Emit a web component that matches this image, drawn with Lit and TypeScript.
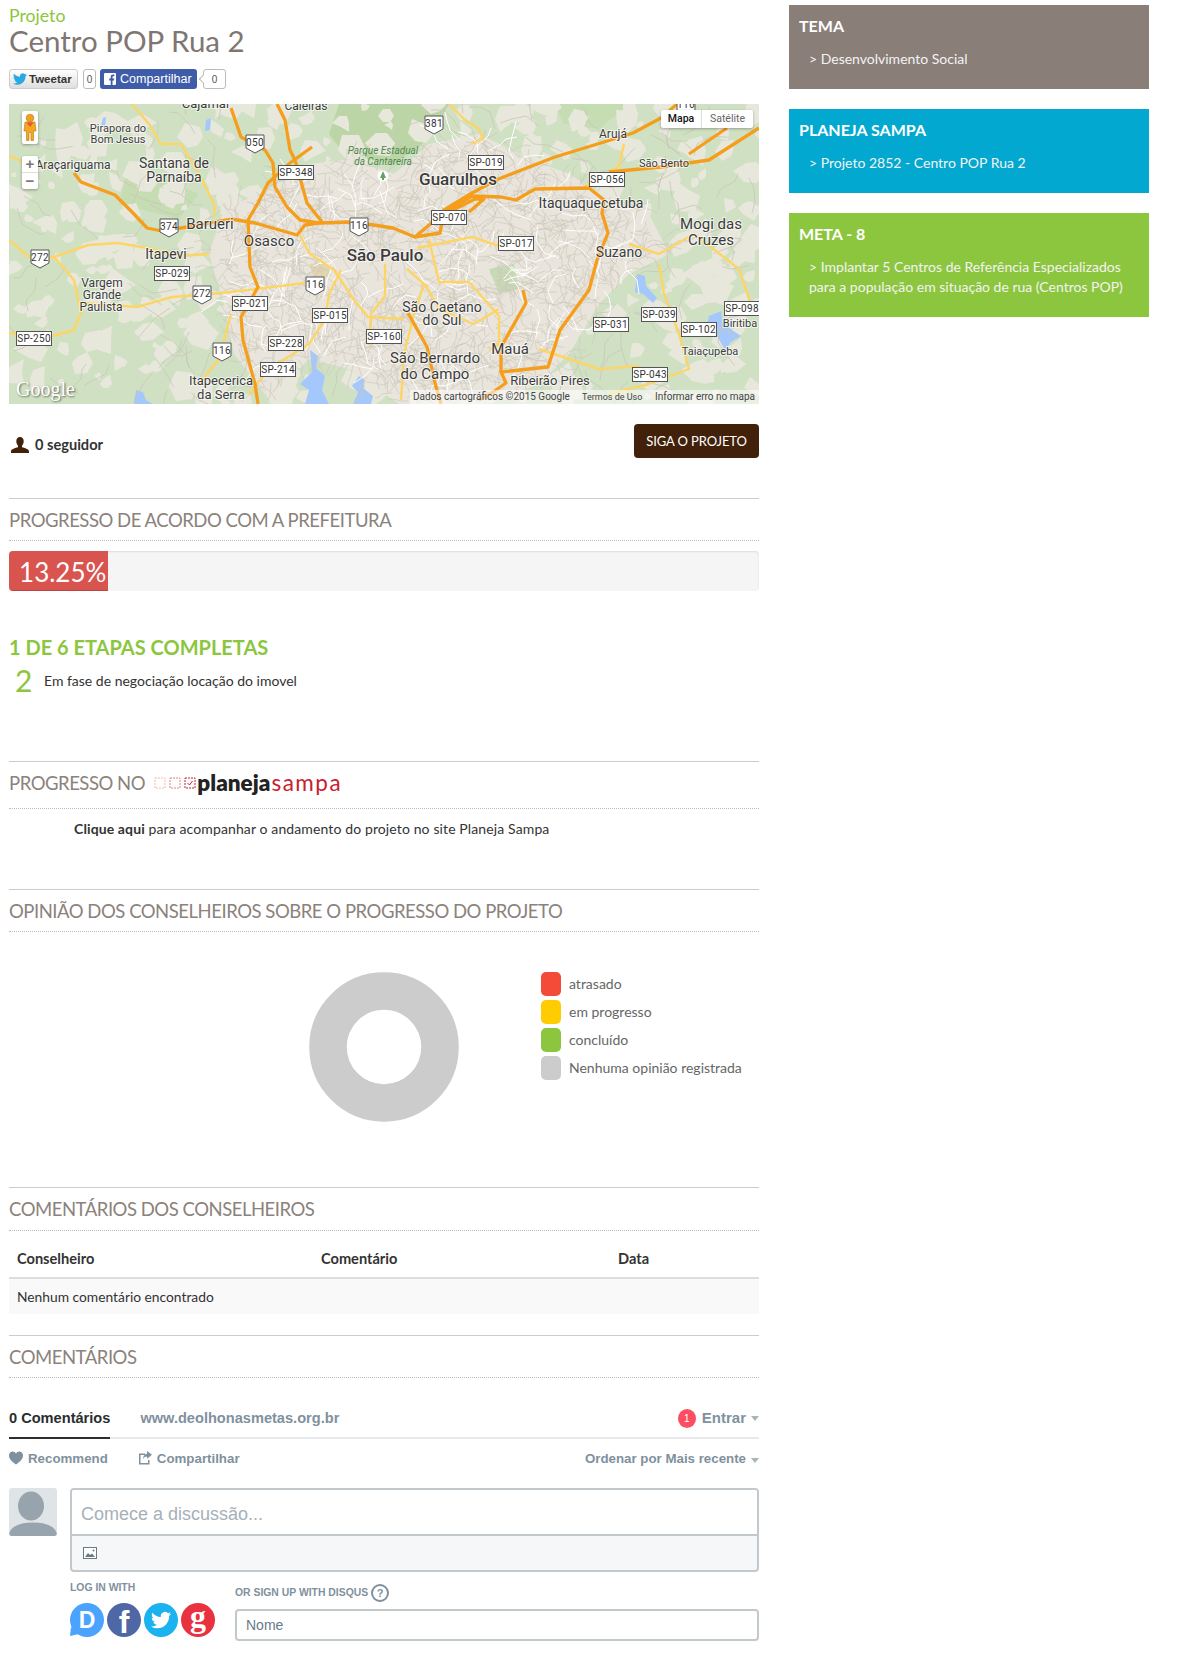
import { LitElement, html, css, svg } from 'lit';
import { customElement } from 'lit/decorators.js';

type Pt = [number, number];

const URBAN: Pt[] = [
  [300, 60], [345, 55], [385, 70], [420, 40], [470, 30], [520, 55], [560, 70], [600, 95],
  [640, 110], [660, 150], [620, 170], [590, 200], [560, 250], [530, 280], [480, 300],
  [390, 300], [340, 265], [300, 255], [260, 295], [225, 250], [215, 200], [200, 150],
  [215, 105], [250, 90],
];

const ORANGE: Pt[][] = [
  [[65, 69], [72, 78], [106, 91], [124, 109], [138, 124], [153, 127], [178, 123], [222, 115], [246, 119], [288, 131], [296, 121], [310, 119], [345, 118], [384, 124], [406, 133], [431, 129], [435, 106], [463, 89], [487, 76], [546, 53], [595, 38], [624, 29], [652, 14], [668, 0]],
  [[268, 0], [276, 16], [281, 46], [286, 56], [298, 99], [313, 118]],
  [[303, 43], [281, 59], [259, 79], [249, 99], [239, 116], [241, 163], [249, 183], [232, 213], [234, 236], [246, 280], [249, 300]],
  [[222, 4], [232, 33], [256, 46], [264, 59], [266, 83], [278, 103], [291, 116], [310, 119]],
  [[406, 133], [433, 110], [463, 92], [492, 93], [507, 96], [526, 85], [580, 84], [595, 96], [593, 109], [599, 129], [588, 156], [580, 186], [551, 226], [539, 263], [492, 268], [497, 279], [484, 288], [470, 296]],
  [[440, 108], [466, 95], [475, 95], [460, 108]],
  [[600, 68], [652, 63], [700, 56], [750, 24]],
  [[718, 24], [693, 41], [680, 50]],
  [[514, 186], [517, 199], [492, 243], [492, 268]],
  [[399, 209], [418, 243], [426, 279], [432, 300]],
];

const YELLOW: Pt[][] = [
  [[0, 136], [20, 153], [45, 153], [79, 141], [109, 139], [138, 144], [170, 152], [200, 150]],
  [[45, 153], [65, 176], [72, 209], [65, 226], [40, 233], [0, 229]],
  [[74, 199], [128, 203], [163, 193], [192, 191], [222, 188], [296, 179]],
  [[291, 131], [300, 149], [325, 166], [345, 196], [359, 213], [395, 215]],
  [[408, 144], [463, 133], [487, 141], [505, 136]],
  [[332, 166], [320, 190], [316, 215], [300, 240], [260, 265], [240, 290]],
  [[376, 160], [376, 192], [362, 210], [360, 240], [380, 232]],
  [[398, 165], [415, 180], [405, 210], [395, 250], [392, 296]],
  [[416, 180], [430, 205], [465, 220], [490, 205]],
  [[420, 135], [430, 178], [460, 178], [490, 212], [490, 240], [480, 245]],
  [[123, 0], [140, 20], [152, 40], [172, 40], [190, 70], [205, 100], [206, 112]],
  [[0, 52], [15, 58], [40, 62]],
  [[440, 0], [455, 15], [470, 25], [474, 35], [462, 40]],
  [[572, 85], [610, 62], [615, 40]],
  [[620, 140], [650, 150], [685, 130], [730, 165], [745, 210]],
  [[600, 290], [640, 280], [680, 265], [670, 230], [655, 190], [650, 160]],
  [[190, 280], [210, 255], [222, 210]],
  [[530, 245], [590, 265], [630, 262]],
];

const BLUE: Pt[][] = [
  [[301, 246], [309, 252], [307, 264], [316, 272], [313, 286], [320, 300], [296, 300], [300, 286], [291, 280], [303, 268]],
  [[350, 272], [356, 276], [354, 284], [364, 292], [362, 300], [344, 300], [349, 288], [343, 282]],
  [[628, 170], [636, 172], [637, 182], [648, 194], [644, 199], [634, 190], [626, 188]],
  [[700, 212], [712, 207], [714, 220], [732, 232], [722, 238], [716, 246], [708, 232], [696, 228]],
  [[127, 286], [134, 288], [137, 296], [144, 300], [125, 300]],
  [[94, 14], [97, 13], [96, 22], [92, 22]],
  [[197, 16], [202, 14], [201, 26], [196, 27]],
];

type Label = [string, number, number, number, number?];

const LABELS: Label[] = [
  ['Cajamar', 197, -1, 13], ['Caieiras', 297, 2, 12],
  ['Pirapora do', 109, 24, 11], ['Bom Jesus', 109, 35, 11], ['Araçariguama', 64, 61, 12],
  ['Santana de', 165, 59, 14], ['Parnaíba', 165, 73, 14],
  ['Guarulhos', 449, 75, 17, 500], ['São Paulo', 376, 151, 17, 500],
  ['Barueri', 201, 120, 15], ['Osasco', 260, 137, 15], ['Itapevi', 157, 150, 14],
  ['Itaquaquecetuba', 582, 99, 14], ['Mogi das', 702, 120, 15], ['Cruzes', 702, 136, 15],
  ['Suzano', 610, 148, 14], ['São Caetano', 433, 203, 14], ['do Sul', 433, 216, 14],
  ['São Bernardo', 426, 254, 15], ['do Campo', 426, 270, 15], ['Mauá', 501, 245, 15],
  ['Ribeirão Pires', 541, 276, 13], ['Itapecerica', 212, 276, 13], ['da Serra', 212, 290, 13],
  ['Vargem', 93, 179, 12], ['Grande', 93, 191, 12], ['Paulista', 92, 203, 12],
  ['Arujá', 604, 30, 12], ['São Bento', 655, 59, 11], ['Biritiba', 731, 219, 11], ['Taiaçupeba', 701, 247, 11],
];

const SHIELDS: [string, number, number][] = [
  ['050', 246, 40], ['381', 425, 21], ['374', 160, 124], ['272', 31, 155], ['272', 193, 191],
  ['116', 350, 123], ['116', 306, 182], ['116', 213, 248], ['116', 677, 2],
];

const SIGNS: [string, number, number][] = [
  ['SP-348', 287, 68], ['SP-019', 477, 58], ['SP-056', 598, 75], ['SP-070', 440, 113], ['SP-017', 507, 139],
  ['SP-029', 163, 169], ['SP-021', 241, 199], ['SP-015', 321, 211], ['SP-250', 25, 234], ['SP-228', 277, 239],
  ['SP-160', 375, 232], ['SP-214', 269, 265], ['SP-031', 602, 220], ['SP-039', 650, 210], ['SP-098', 733, 204],
  ['SP-102', 690, 225], ['SP-043', 641, 270],
];

const pts = (p: Pt[]) => p.map((q) => q.join(',')).join(' ');

function inside([x, y]: Pt, poly: Pt[]) {
  let hit = false;
  for (let i = 0, j = poly.length - 1; i < poly.length; j = i++) {
    const [xi, yi] = poly[i];
    const [xj, yj] = poly[j];
    if (yi > y !== yj > y && x < ((xj - xi) * (y - yi)) / (yj - yi) + xi) hit = !hit;
  }
  return hit;
}

// small seeded generator so the street texture is the same on every run
let seed = 4711;
const rnd = () => {
  seed = (seed * 16807) % 2147483647;
  return seed / 2147483647;
};

function streets(count: number, city: boolean, min: number, max: number) {
  const out: string[] = [];
  while (out.length < count) {
    const start: Pt = [rnd() * 750, rnd() * 300];
    if (inside(start, URBAN) !== city) continue;
    let a = rnd() * 6.28;
    const line: Pt[] = [start];
    for (let i = 0; i < 3; i++) {
      const [x, y] = line[line.length - 1];
      const len = min + rnd() * (max - min);
      line.push([Math.round(x + Math.cos(a) * len), Math.round(y + Math.sin(a) * len)]);
      a += (rnd() - 0.5) * 1.8;
    }
    out.push(pts(line));
  }
  return out;
}

function patches(count: number) {
  const out: string[] = [];
  while (out.length < count) {
    const c: Pt = [rnd() * 750, rnd() * 300];
    if (inside(c, URBAN)) continue;
    const r = 3 + rnd() * 11;
    const blob: Pt[] = [];
    for (let i = 0; i < 6; i++) {
      const a = (i / 6) * 6.28;
      const k = r * (0.5 + rnd());
      blob.push([Math.round(c[0] + Math.cos(a) * k), Math.round(c[1] + Math.sin(a) * k)]);
    }
    out.push(pts(blob));
  }
  return out;
}

const LIGHT = patches(290);
const FINE = streets(1300, true, 4, 11);
const WHITE = streets(150, true, 6, 16);
const RURAL = streets(110, false, 7, 18);

const BIRD = 'M23.953 4.57a10 10 0 01-2.825.775 4.958 4.958 0 002.163-2.723c-.951.555-2.005.959-3.127 1.184a4.92 4.92 0 00-8.384 4.482C7.69 8.095 4.067 6.13 1.64 3.162a4.822 4.822 0 00-.666 2.475c0 1.71.87 3.213 2.188 4.096a4.904 4.904 0 01-2.228-.616v.06a4.923 4.923 0 003.946 4.827 4.996 4.996 0 01-2.212.085 4.936 4.936 0 004.604 3.417 9.867 9.867 0 01-6.102 2.105c-.39 0-.779-.023-1.17-.067a13.995 13.995 0 007.557 2.209c9.053 0 13.998-7.496 13.998-13.985 0-.21 0-.42-.015-.63A9.935 9.935 0 0024 4.59z';

const LEGEND = [
  ['atrasado', '#f44b38'],
  ['em progresso', '#ffcc00'],
  ['concluído', '#8cc63e'],
  ['Nenhuma opinião registrada', '#cccccc'],
];

const SIDE = [
  { title: 'TEMA', text: ['> Desenvolvimento Social'], color: '#897e78' },
  { title: 'PLANEJA SAMPA', text: ['> Projeto 2852 - Centro POP Rua 2'], color: '#02a8cf' },
  {
    title: 'META - 8',
    text: ['> Implantar 5 Centros de Referência Especializados', 'para a população em situação de rua (Centros POP)'],
    color: '#8cc63e',
  },
];

@customElement('app-root')
export class AppRoot extends LitElement {
  static styles = css`
    :host {
      display: block;
      width: 1178px;
      height: 1655px;
      overflow: hidden;
      background: #fff;
      font-family: Lato, 'Noto Sans', sans-serif;
      font-size: 14px;
      color: #333;
    }

    .page {
      display: flex;
      gap: 30px;
      padding-left: 9px;
    }

    .main {
      width: 750px;
      flex: none;
    }

    .side {
      width: 360px;
      flex: none;
      display: flex;
      flex-direction: column;
      gap: 20px;
      padding-top: 5px;
    }

    .eyebrow {
      margin-top: 6px;
      font-size: 17.7px;
      line-height: 20px;
      color: #8cc63e;
    }

    h1 {
      margin: -1px 0 0;
      font-size: 29.5px;
      font-weight: 400;
      line-height: 32px;
      color: #7f7671;
    }

    .share {
      display: flex;
      height: 20px;
      margin-top: 12px;
      font: 700 11.5px 'Liberation Sans', sans-serif;
    }

    .tw {
      display: flex;
      align-items: center;
      gap: 2px;
      width: 69px;
      box-sizing: border-box;
      padding-left: 3px;
      border: 1px solid #ccc;
      border-radius: 3px;
      background: linear-gradient(#fff, #dedede);
      color: #333;
    }

    .tw svg {
      width: 14px;
      height: 14px;
      fill: #2aa9e0;
    }

    .count {
      display: flex;
      align-items: center;
      justify-content: center;
      box-sizing: border-box;
      height: 20px;
      border: 1px solid #bbb;
      border-radius: 3px;
      font: 400 10px 'Liberation Sans', sans-serif;
      color: #555;
    }

    .count-tw {
      width: 13px;
      margin: 0 4px 0 5px;
    }

    .count-fb {
      position: relative;
      width: 23px;
      margin-left: 6px;
    }

    .count-fb::before {
      content: '';
      position: absolute;
      left: -4px;
      top: 6px;
      width: 5px;
      height: 5px;
      background: #fff;
      border-left: 1px solid #bbb;
      border-bottom: 1px solid #bbb;
      transform: rotate(45deg);
    }

    .fb {
      display: flex;
      align-items: center;
      gap: 4px;
      width: 97px;
      box-sizing: border-box;
      padding-left: 4px;
      border-radius: 3px;
      background: #3f5ca8;
      color: #fff;
      font-weight: 400;
      font-size: 12.5px;
      white-space: nowrap;
    }

    .fb svg {
      width: 12px;
      height: 12px;
      flex: none;
    }

    .map {
      position: relative;
      height: 300px;
      margin-top: 15px;
      overflow: hidden;
    }

    .map > svg {
      display: block;
      width: 750px;
      height: 300px;
      background: #d0e1c3;
    }

    .street-fine {
      fill: none;
      stroke: #cdc8bc;
      stroke-width: 0.7;
    }

    .street-white {
      fill: none;
      stroke: #fff;
      stroke-width: 1;
    }

    .street-rural {
      fill: none;
      stroke: #c9c6b6;
      stroke-width: 0.8;
    }

    .road-o {
      fill: none;
      stroke: #f59e1c;
      stroke-width: 3.3;
      stroke-linejoin: round;
    }

    .road-y {
      fill: none;
      stroke: #fdd567;
      stroke-width: 2.4;
      stroke-linejoin: round;
    }

    .place {
      font-family: Roboto, sans-serif;
      text-anchor: middle;
      dominant-baseline: central;
      fill: #3c3c3c;
      stroke: rgba(255, 255, 255, 0.65);
      stroke-width: 2px;
      paint-order: stroke;
    }

    .park {
      font: italic 10px Roboto, sans-serif;
      text-anchor: middle;
      dominant-baseline: central;
      fill: #4b8a4b;
    }

    .sign-box {
      fill: #fff;
      stroke: #555;
      stroke-width: 1;
    }

    .sign-text {
      font: 10px Roboto, sans-serif;
      letter-spacing: 0.3px;
      text-anchor: middle;
      dominant-baseline: central;
      fill: #333;
    }

    .peg,
    .zoom-ctl {
      position: absolute;
      left: 13px;
      width: 16px;
      background: #fff;
      border-radius: 2px;
      box-shadow: 0 1px 3px rgba(0, 0, 0, 0.35);
    }

    .peg {
      top: 7px;
      height: 33px;
    }

    .peg svg {
      display: block;
      width: 16px;
      height: 33px;
    }

    .zoom-ctl {
      top: 52px;
      height: 33px;
      font: 700 15px/16px 'Liberation Sans', sans-serif;
      color: #777;
      text-align: center;
    }

    .zoom-ctl div:first-child {
      height: 16px;
      border-bottom: 1px solid #ddd;
    }

    .map-type {
      position: absolute;
      top: 6px;
      left: 652px;
      display: flex;
      width: 92px;
      height: 18px;
      font: 10.5px/18px Roboto, sans-serif;
      background: #fff;
      box-shadow: 0 1px 3px rgba(0, 0, 0, 0.3);
      border-radius: 2px;
      text-align: center;
    }

    .map-type span {
      flex: 1;
      color: #666;
    }

    .map-type span:first-child {
      flex: 0 0 41px;
      box-sizing: border-box;
      font-weight: 500;
      color: #111;
      border-right: 1px solid #ddd;
    }

    .map-foot {
      position: absolute;
      right: 0;
      bottom: 0;
      display: flex;
      box-sizing: border-box;
      width: 349px;
      height: 14px;
      padding-left: 3px;
      font: 10px/14px Roboto, sans-serif;
      color: #444;
      background: rgba(255, 255, 255, 0.55);
      white-space: nowrap;
    }

    .map-foot span:nth-child(1) {
      width: 169px;
    }

    .map-foot span:nth-child(2) {
      width: 73px;
      font-size: 9px;
    }

    .google {
      position: absolute;
      left: 7px;
      bottom: 3px;
      font: 20px 'Liberation Serif', serif;
      color: #fff;
      text-shadow: 1px 1px 2px rgba(0, 0, 0, 0.55);
    }

    .follow {
      display: flex;
      justify-content: space-between;
      align-items: flex-start;
      margin-top: 20px;
    }

    .followers {
      display: flex;
      align-items: center;
      gap: 6px;
      margin-top: 12px;
      font-weight: 700;
      font-size: 14.6px;
      line-height: 18px;
      color: #333;
    }

    .followers svg {
      width: 18px;
      height: 16px;
      margin-left: 2px;
      fill: #42210b;
    }

    .btn {
      width: 125px;
      height: 34px;
      border-radius: 4px;
      background: #42210b;
      color: #fff;
      font-size: 13px;
      letter-spacing: -0.1px;
      line-height: 34px;
      text-align: center;
    }

    .sec-head {
      display: flex;
      align-items: center;
      box-sizing: border-box;
      height: 43px;
      border-top: 1px solid #ccc;
      border-bottom: 1px dotted #bbb;
      font-size: 18.5px;
      letter-spacing: -0.47px;
      color: #8b827c;
      white-space: pre;
    }

    .sec-1 {
      margin-top: 40px;
    }

    .bar {
      height: 40px;
      box-sizing: border-box;
      margin-top: 10px;
      border-radius: 4px;
      background: #f5f5f5;
      box-shadow: inset 0 1px 2px rgba(0, 0, 0, 0.1);
      overflow: hidden;
    }

    .bar-fill {
      box-sizing: border-box;
      height: 100%;
      padding-right: 2px;
      background: #d9534f;
      color: #fff;
      font-size: 26px;
      line-height: 42px;
      text-align: right;
      box-shadow: inset 0 -1px 0 rgba(0, 0, 0, 0.15);
    }

    .steps {
      margin-top: 43px;
      font-size: 20px;
      font-weight: 700;
      line-height: 26px;
      color: #8cc63e;
    }

    .step {
      display: flex;
      align-items: center;
      height: 30px;
      margin-top: 5px;
      font-size: 14px;
      color: #333;
    }

    .step b {
      width: 35px;
      padding-left: 6px;
      box-sizing: border-box;
      font-size: 30px;
      font-weight: 400;
      color: #8cc63e;
    }

    .sec-2 {
      margin-top: 66px;
    }

    .sec-head.logo-head {
      height: 48px;
      padding-bottom: 4px;
    }

    .logo {
      display: flex;
      align-items: center;
      margin-left: 5px;
      letter-spacing: 0;
    }

    .logo svg {
      width: 42px;
      height: 14px;
      margin-right: 1px;
    }

    .logo b {
      font: 800 22.5px/24px Lato, sans-serif;
      color: #222;
    }

    .logo span {
      font: 400 22.5px/24px Lato, sans-serif;
      letter-spacing: 1.5px;
      color: #c8202f;
      margin-left: 1px;
    }

    .link-text {
      margin-top: 10px;
      padding-left: 65px;
      line-height: 20px;
      font-size: 14px;
      letter-spacing: 0.12px;
    }

    .sec-3 {
      margin-top: 50px;
    }

    .chart {
      display: flex;
      align-items: flex-start;
      gap: 83px;
      margin-top: 40px;
      padding-left: 300px;
      height: 150px;
    }

    .donut {
      display: block;
      width: 150px;
      height: 150px;
      flex: none;
      fill: none;
      stroke: #ccc;
    }

    .legend {
      display: flex;
      flex-direction: column;
      gap: 4px;
      margin-left: -1px;
    }

    .legend div {
      display: flex;
      align-items: center;
      gap: 8px;
      height: 24px;
      color: #666;
      font-size: 14px;
      white-space: nowrap;
    }

    .legend i {
      width: 20px;
      height: 24px;
      border-radius: 5px;
    }

    .legend span {
      margin-top: -2px;
    }

    .sec-head.sec-4 {
      height: 44px;
      margin-top: 65px;
    }

    table {
      width: 750px;
      border-collapse: collapse;
      table-layout: fixed;
    }

    th {
      height: 47px;
      box-sizing: border-box;
      padding: 9px 0 0 8px;
      border-bottom: 2px solid #ddd;
      text-align: left;
      font-weight: 700;
      font-size: 14.6px;
      color: #333;
    }

    td {
      height: 35px;
      padding: 0 0 0 8px;
      background: #f9f9f9;
      font-size: 13.8px;
    }

    .c1 {
      width: 304px;
    }

    .c2 {
      width: 297px;
    }

    .sec-5 {
      margin-top: 21px;
    }

    .dq {
      font-family: 'Liberation Sans', Arial, sans-serif;
      color: #7f919e;
      font-weight: 700;
    }

    .dq-tabs {
      display: flex;
      align-items: flex-start;
      height: 39px;
      box-sizing: border-box;
      margin-top: 22px;
      border-bottom: 2px solid #e7e9ee;
      font-size: 14.6px;
      line-height: 36px;
    }

    .dq-active {
      height: 39px;
      box-sizing: border-box;
      border-bottom: 2px solid #2a2e2e;
      color: #2a2e2e;
    }

    .dq-site {
      margin-left: 30px;
    }

    .dq-login {
      display: flex;
      align-items: center;
      margin-left: auto;
      height: 36px;
      font-size: 15px;
    }

    .badge {
      width: 18px;
      height: 19px;
      margin-right: 6px;
      border-radius: 50%;
      background: #fb4e62;
      color: #fff;
      font: 400 10px/19px 'Liberation Sans', sans-serif;
      text-align: center;
    }

    .caret {
      display: inline-block;
      margin-left: 5px;
      border-left: 4.5px solid transparent;
      border-right: 4.5px solid transparent;
      border-top: 5px solid #aab4bb;
    }

    .dq-actions {
      display: flex;
      align-items: center;
      height: 20px;
      margin-top: 9px;
      font-size: 13.3px;
    }

    .dq-actions svg {
      width: 14px;
      height: 14px;
      margin-right: 5px;
      fill: #7f919e;
    }

    .dq-share {
      display: flex;
      align-items: center;
      margin-left: 30px;
    }

    .dq-rec {
      display: flex;
      align-items: center;
    }

    .dq-sort {
      margin-left: auto;
    }

    .dq-post {
      display: flex;
      gap: 13px;
      margin-top: 20px;
    }

    .avatar {
      display: block;
      width: 48px;
      height: 48px;
      flex: none;
      border-radius: 3px;
    }

    .dq-form {
      flex: 1;
    }

    .box {
      box-sizing: border-box;
      height: 84px;
      border: 2px solid #c2c9cd;
      border-radius: 4px;
      overflow: hidden;
      background: #f6f7f8;
    }

    .box-top {
      box-sizing: border-box;
      height: 46px;
      padding-left: 9px;
      border-bottom: 2px solid #c2c9cd;
      background: #fff;
      font: 400 18px/48px 'Liberation Sans', sans-serif;
      color: #a6b0b8;
    }

    .box-bot {
      padding: 11px 0 0 11px;
    }

    .box-bot svg {
      display: block;
      width: 14px;
      height: 12px;
    }

    .auth {
      display: flex;
      gap: 20px;
    }

    .auth-left {
      width: 145px;
      flex: none;
      margin-top: 9px;
    }

    .auth-right {
      flex: 1;
      margin-top: 12px;
    }

    .small {
      font-size: 10.4px;
      line-height: 14px;
      color: #7f919e;
    }

    .socials {
      display: flex;
      gap: 3px;
      margin-top: 8px;
    }

    .socials svg {
      display: block;
      width: 34px;
      height: 34px;
    }

    .soc-letter {
      font: 700 23px 'Liberation Sans', sans-serif;
      text-anchor: middle;
      fill: #fff;
    }

    .soc-f {
      font: 700 32px 'Liberation Sans', sans-serif;
      text-anchor: middle;
      fill: #fff;
    }

    .soc-serif {
      font: 700 32px 'Liberation Serif', serif;
      text-anchor: middle;
      fill: #fff;
    }

    .or {
      display: flex;
      align-items: center;
      gap: 3px;
      height: 18px;
    }

    .help {
      width: 18px;
      height: 18px;
      box-sizing: border-box;
      border: 2px solid #7f919e;
      border-radius: 50%;
      font: 700 11px/14px 'Liberation Sans', sans-serif;
      text-align: center;
    }

    .input {
      box-sizing: border-box;
      height: 32px;
      margin-top: 7px;
      padding-left: 9px;
      border: 2px solid #c2c9cd;
      border-radius: 4px;
      font: 400 14px/28px 'Liberation Sans', sans-serif;
      color: #687a86;
    }

    .card {
      color: #fff;
      padding: 9px 10px 20px;
    }

    .card h3 {
      margin: 0 0 11px;
      font-size: 16px;
      font-weight: 700;
      line-height: 24px;
    }

    .card p {
      margin: 0;
      padding-left: 10px;
      font-size: 14px;
      line-height: 20px;
      color: #f3f3f3;
      white-space: nowrap;
    }
  `;

  private renderMapShapes() {
    return svg`
      <polygon points="330,0 440,0 420,35 385,60 335,50 320,30" fill="#bcd5a6"></polygon>
      <polygon points="545,0 620,0 590,25 555,20" fill="#c6dcb3"></polygon>
      <polygon points="120,60 190,90 170,115 110,100" fill="#c6dcb3"></polygon>
      ${LIGHT.map((p) => svg`<polygon points=${p} fill="#e8e7dc"></polygon>`)}
      <polygon points=${pts(URBAN)} fill="#e9e5dc"></polygon>
      <polygon points="480,165 505,160 510,185 490,190" fill="#c6dcb3"></polygon>
      <polygon points="300,160 318,158 322,172 306,176" fill="#e2d6b0"></polygon>
      ${BLUE.map((p) => svg`<polygon points=${pts(p)} fill="#a4c8fb"></polygon>`)}
      ${RURAL.map((p) => svg`<polyline class="street-rural" points=${p}></polyline>`)}
      ${FINE.map((p) => svg`<polyline class="street-fine" points=${p}></polyline>`)}
      ${WHITE.map((p) => svg`<polyline class="street-white" points=${p}></polyline>`)}
      ${YELLOW.map((p) => svg`<polyline class="road-y" points=${pts(p)}></polyline>`)}
      ${ORANGE.map((p) => svg`<polyline class="road-o" points=${pts(p)}></polyline>`)}
    `;
  }

  private renderMapLabels() {
    return svg`
      ${LABELS.map(
        ([t, x, y, size, weight]) =>
          svg`<text class="place" x=${x} y=${y} font-size=${size} font-weight=${weight ?? 400}>${t}</text>`
      )}
      <text class="park" x="374" y="46">Parque Estadual</text>
      <text class="park" x="374" y="57">da Cantareira</text>
      <circle cx="374" cy="72" r="5.5" fill="#fff"></circle>
      <path d="M374 67l3 7h-2v2h-2v-2h-2z" fill="#5fa35f"></path>
      ${SHIELDS.map(
        ([t, x, y]) => svg`
          <path class="sign-box" d=${`M${x - 9} ${y - 9}h18v13l-9 5l-9-5z`}></path>
          <text class="sign-text" x=${x} y=${y - 2}>${t}</text>`
      )}
      ${SIGNS.map(
        ([t, x, y]) => svg`
          <rect class="sign-box" x=${x - 17.5} y=${y - 6.5} width="35" height="14"></rect>
          <text class="sign-text" x=${x} y=${y + 0.5}>${t}</text>`
      )}
    `;
  }

  private renderMap() {
    return html`<div class="map">
      <svg viewBox="0 0 750 300">${this.renderMapShapes()} ${this.renderMapLabels()}</svg>
      <div class="google">Google</div>
      <div class="peg">
        <svg viewBox="0 0 16 33">
          <circle cx="8" cy="7" r="3.8" fill="#f1a21c" stroke="#b97708" stroke-width="0.6"></circle>
          <path d="M3 11h10l1 9h-2.500v9.500H9v-8H7v8H4.500V20H2z" fill="#f5a81f" stroke="#b97708" stroke-width="0.6"></path>
          <path d="M4.500 11.500h7L8 16z" fill="#e8533c"></path>
        </svg>
      </div>
      <div class="zoom-ctl">
        <div>+</div>
        <div>−</div>
      </div>
      <div class="map-type"><span>Mapa</span><span>Satélite</span></div>
      <div class="map-foot">
        <span>Dados cartográficos ©2015 Google</span><span>Termos de Uso</span><span>Informar erro no mapa</span>
      </div>
    </div>`;
  }

  private renderLogo() {
    return html`<span class="logo">
      <svg viewBox="0 0 42 14">
        <rect x="1" y="2" width="10" height="10" fill="none" stroke="#f4b5b9" stroke-dasharray="2 1"></rect>
        <rect x="16" y="2" width="10" height="10" fill="none" stroke="#e88088" stroke-dasharray="2 1"></rect>
        <rect x="31" y="2" width="10" height="10" fill="none" stroke="#c8202f" stroke-dasharray="2 1"></rect>
        <path d="M33.500 7l2 2 3-4" fill="none" stroke="#c8202f"></path>
      </svg>
      <b>planeja</b><span>sampa</span>
    </span>`;
  }

  private renderDisqus() {
    return html`<div class="dq">
      <div class="dq-tabs">
        <div class="dq-active">0 Comentários</div>
        <div class="dq-site">www.deolhonasmetas.org.br</div>
        <div class="dq-login"><span class="badge">1</span>Entrar<i class="caret"></i></div>
      </div>
      <div class="dq-actions">
        <span class="dq-rec">
          <svg viewBox="0 0 14 14"><path d="M7 13.500C2 10 0 7.500 0 4.500 0 2 1.700.5 3.700.5 5.100.5 6.300 1.200 7 2.500 7.700 1.200 8.900.5 10.300.5 12.300.5 14 2 14 4.500 14 7.500 12 10 7 13.500z"></path></svg>Recommend
        </span>
        <span class="dq-share">
          <svg viewBox="0 0 14 14"><path d="M1 2.500h6v1.500H2.500v8H10V9h1.500v4.500H1zM9 0l5 3.800-5 3.900V5.500C7.200 5.500 6 6.300 5 8c.2-3 1.600-5 4-5.300z"></path></svg>Compartilhar
        </span>
        <span class="dq-sort">Ordenar por Mais recente<i class="caret"></i></span>
      </div>
      <div class="dq-post">
        <svg class="avatar" viewBox="0 0 48 48">
          <rect width="48" height="48" fill="#dfe4e7"></rect>
          <ellipse cx="22" cy="18" rx="13" ry="14.5" fill="#98a4ad"></ellipse>
          <path d="M0 48c0-9 10-13.500 24-13.500S48 39 48 48z" fill="#98a4ad"></path>
        </svg>
        <div class="dq-form">
          <div class="box">
            <div class="box-top">Comece a discussão...</div>
            <div class="box-bot">
              <svg viewBox="0 0 14 12">
                <rect x="0.5" y="0.5" width="13" height="11" fill="#fff" stroke="#687a86"></rect>
                <path d="M2 10l3-4 2 2 2-1.500 3 3.500z" fill="#687a86"></path>
                <circle cx="10.5" cy="3.5" r="1" fill="#687a86"></circle>
              </svg>
            </div>
          </div>
          <div class="auth">
            <div class="auth-left">
              <div class="small">LOG IN WITH</div>
              <div class="socials">
                <svg viewBox="0 0 34 34">
                  <circle cx="17" cy="17" r="17" fill="#4aa3ff"></circle>
                  <path d="M1 24l-1 9 9-2z" fill="#4aa3ff"></path>
                  <text class="soc-letter" x="17" y="25">D</text>
                </svg>
                <svg viewBox="0 0 34 34">
                  <circle cx="17" cy="17" r="17" fill="#4f67a5"></circle>
                  <text class="soc-f" x="17" y="30">f</text>
                </svg>
                <svg viewBox="0 0 34 34">
                  <circle cx="17" cy="17" r="17" fill="#1ab2ef"></circle>
                  <path d=${BIRD} fill="#fff" transform="translate(7 7) scale(.84)"></path>
                </svg>
                <svg viewBox="0 0 34 34">
                  <circle cx="17" cy="17" r="17" fill="#e8323f"></circle>
                  <text class="soc-serif" x="17" y="24">g</text>
                </svg>
              </div>
            </div>
            <div class="auth-right">
              <div class="or small">OR SIGN UP WITH DISQUS <span class="help">?</span></div>
              <div class="input">Nome</div>
            </div>
          </div>
        </div>
      </div>
    </div>`;
  }

  render() {
    return html`<div class="page">
      <div class="main">
        <div class="eyebrow">Projeto</div>
        <h1>Centro POP Rua 2</h1>
        <div class="share">
          <div class="tw"><svg viewBox="0 0 24 24"><path d=${BIRD}></path></svg>Tweetar</div>
          <div class="count count-tw">0</div>
          <div class="fb">
            <svg viewBox="0 0 24 24">
              <rect width="24" height="24" rx="2" fill="#fff"></rect>
              <path d="M17 24v-9h3l.5-4H17V8.500c0-1.100.4-1.800 1.900-1.800h1.700V3.100C20.200 3 19.200 3 18 3c-2.600 0-4.500 1.600-4.500 4.600V11h-3v4h3v9z" fill="#3f5ca8"></path>
            </svg>
            Compartilhar
          </div>
          <div class="count count-fb">0</div>
        </div>
        ${this.renderMap()}
        <div class="follow">
          <div class="followers">
            <svg viewBox="0 0 18 16"><path d="M9 0c2.400 0 3.700 1.800 3.700 4.200 0 1.800-.7 3.400-1.700 4.500v1.500c2.500.8 7 1.500 7 4.300V16H0v-1.500c0-2.800 4.500-3.500 7-4.300V8.700C6 7.600 5.300 6 5.300 4.200 5.300 1.800 6.600 0 9 0z"></path></svg>
            0 seguidor
          </div>
          <div class="btn">SIGA O PROJETO</div>
        </div>
        <div class="sec-head sec-1">PROGRESSO DE ACORDO COM A PREFEITURA</div>
        <div class="bar"><div class="bar-fill" style="width: 13.25%">13.25%</div></div>
        <div class="steps">1 DE 6 ETAPAS COMPLETAS</div>
        <div class="step"><b>2</b>Em fase de negociação locação do imovel</div>
        <div class="sec-head logo-head sec-2">PROGRESSO NO ${this.renderLogo()}</div>
        <div class="link-text"><b>Clique aqui</b> para acompanhar o andamento do projeto no site Planeja Sampa</div>
        <div class="sec-head sec-3">OPINIÃO DOS CONSELHEIROS SOBRE O PROGRESSO DO PROJETO</div>
        <div class="chart">
          <svg class="donut" viewBox="0 0 150 150"><circle cx="75" cy="75" r="56" stroke-width="37.5"></circle></svg>
          <div class="legend">
            ${LEGEND.map(([t, c]) => html`<div><i style="background: ${c}"></i><span>${t}</span></div>`)}
          </div>
        </div>
        <div class="sec-head sec-4">COMENTÁRIOS DOS CONSELHEIROS</div>
        <table>
          <tr><th class="c1">Conselheiro</th><th class="c2">Comentário</th><th>Data</th></tr>
          <tr><td colspan="3">Nenhum comentário encontrado</td></tr>
        </table>
        <div class="sec-head sec-5">COMENTÁRIOS</div>
        ${this.renderDisqus()}
      </div>
      <div class="side">
        ${SIDE.map(
          (s) => html`<div class="card" style="background: ${s.color}">
            <h3>${s.title}</h3>
            ${s.text.map((t) => html`<p>${t}</p>`)}
          </div>`
        )}
      </div>
    </div>`;
  }
}
